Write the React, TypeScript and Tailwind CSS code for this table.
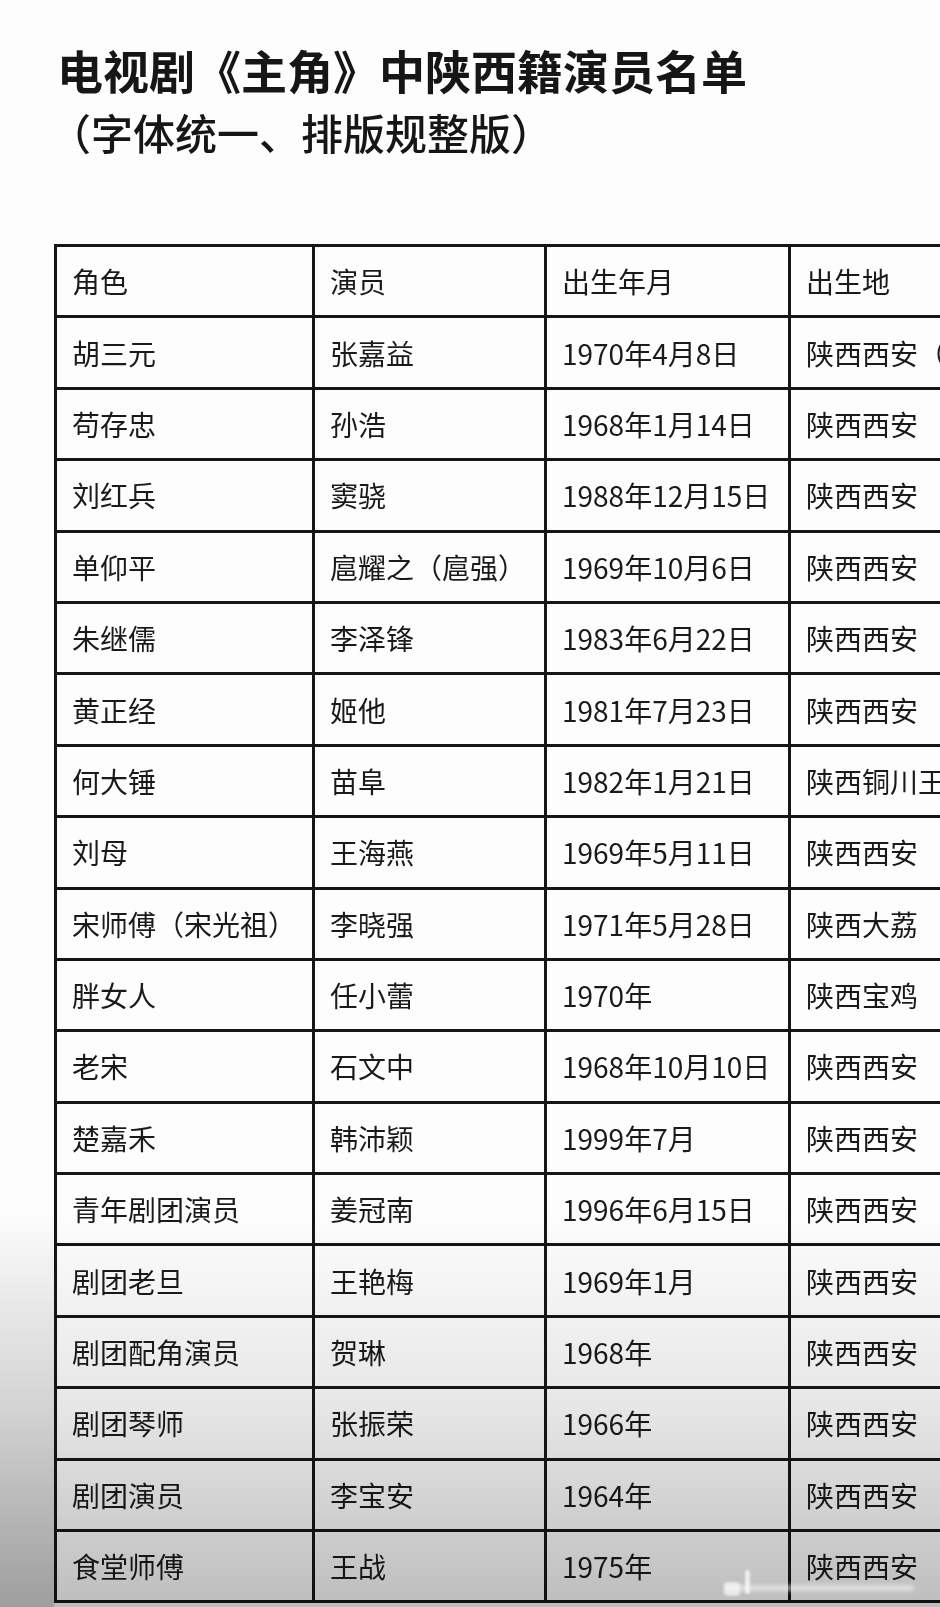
import React from "react";

const rows: [string, string, string, string][] = [
  ["胡三元", "张嘉益", "1970年4月8日", "陕西西安（西安市）"],
  ["苟存忠", "孙浩", "1968年1月14日", "陕西西安"],
  ["刘红兵", "窦骁", "1988年12月15日", "陕西西安"],
  ["单仰平", "扈耀之（扈强）", "1969年10月6日", "陕西西安"],
  ["朱继儒", "李泽锋", "1983年6月22日", "陕西西安"],
  ["黄正经", "姬他", "1981年7月23日", "陕西西安"],
  ["何大锤", "苗阜", "1982年1月21日", "陕西铜川王益区"],
  ["刘母", "王海燕", "1969年5月11日", "陕西西安"],
  ["宋师傅（宋光祖）", "李晓强", "1971年5月28日", "陕西大荔"],
  ["胖女人", "任小蕾", "1970年", "陕西宝鸡"],
  ["老宋", "石文中", "1968年10月10日", "陕西西安"],
  ["楚嘉禾", "韩沛颖", "1999年7月", "陕西西安"],
  ["青年剧团演员", "姜冠南", "1996年6月15日", "陕西西安"],
  ["剧团老旦", "王艳梅", "1969年1月", "陕西西安"],
  ["剧团配角演员", "贺琳", "1968年", "陕西西安"],
  ["剧团琴师", "张振荣", "1966年", "陕西西安"],
  ["剧团演员", "李宝安", "1964年", "陕西西安"],
  ["食堂师傅", "王战", "1975年", "陕西西安"],
];

const header: [string, string, string, string] = ["角色", "演员", "出生年月", "出生地"];

function Row({ cells }: { cells: [string, string, string, string] }) {
  return (
    <div className="flex h-[71.4px] border-b-[3px] border-[#161616]">
      <div className="w-[258px] shrink-0 flex items-center pl-[15px] border-r-[3px] border-[#161616] whitespace-nowrap">
        {cells[0]}
      </div>
      <div className="w-[232px] shrink-0 flex items-center pl-[15px] border-r-[3px] border-[#161616] whitespace-nowrap">
        {cells[1]}
      </div>
      <div className="w-[244px] shrink-0 flex items-center pl-[15px] border-r-[3px] border-[#161616] whitespace-nowrap">
        {cells[2]}
      </div>
      <div className="w-[320px] shrink-0 flex items-center pl-[15px] border-r-[3px] border-[#161616] whitespace-nowrap">
        {cells[3]}
      </div>
    </div>
  );
}

export default function App() {
  return (
    <div
      className="relative w-[940px] h-[1607px] overflow-hidden bg-[#fdfdfd] text-[#161616]"
      style={{ fontFamily: '"Noto Sans CJK SC", "Noto Sans", sans-serif' }}
    >
      <div className="flex flex-col pt-[46px]">
        <h1 className="pl-[57px] text-[46px] leading-none font-bold whitespace-nowrap">
          电视剧《主角》中陕西籍演员名单
        </h1>
        <p className="pl-[49px] mt-[19px] text-[42px] leading-none font-medium whitespace-nowrap">
          （字体统一、排版规整版）
        </p>
      </div>

      <div className="mt-[91px] ml-[54px] w-[1060px] border-l-[3px] border-t-[3px] border-[#161616] text-[28px] leading-none text-[#1a1a1a]">
        <Row cells={header} />
        {rows.map((r, i) => (
          <Row key={i} cells={r} />
        ))}
      </div>

      {/* photo shading toward the bottom */}
      <div className="pointer-events-none absolute left-0 right-0 top-[1210px] bottom-0 bg-gradient-to-b from-transparent via-[rgba(0,0,0,0.09)] to-[rgba(0,0,0,0.25)] mix-blend-multiply" />
      <div className="pointer-events-none absolute left-0 top-[1210px] bottom-0 w-[54px] bg-gradient-to-b from-transparent to-[rgba(0,0,0,0.16)] mix-blend-multiply" />

      {/* faint watermark */}
      <div className="pointer-events-none absolute left-[724px] top-[1585px] w-[190px] h-[6px] rounded-full bg-white/50 blur-[2px]" />
      <div className="pointer-events-none absolute left-[745px] top-[1570px] w-[5px] h-[24px] rounded-full bg-white/70 blur-[1px]" />
      <div className="pointer-events-none absolute left-[724px] top-[1582px] w-[16px] h-[14px] rounded-sm bg-white/60 blur-[1px]" />
    </div>
  );
}
